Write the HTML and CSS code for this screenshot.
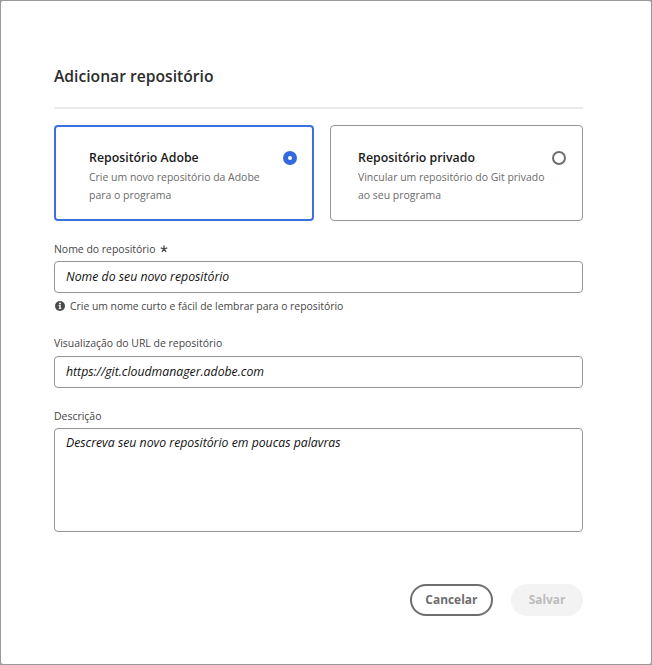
FILE: index.html
```html
<!DOCTYPE html>
<html lang="pt-BR">
<head>
<meta charset="utf-8">
<title>Adicionar repositório</title>
<link rel="stylesheet" href="styles.css">
</head>
<body>
<main class="dialog">
  <h1 class="title"><span class="narrow narrow-head">Adicionar repositório</span></h1>
  <hr class="rule">
  <div class="cards">
    <section class="card card-selected">
      <div class="card-text">
        <h2 class="card-title"><span class="narrow narrow-head">Repositório Adobe</span></h2>
        <p class="card-desc"><span class="narrow">Crie um novo repositório da Adobe<br>para o programa</span></p>
      </div>
      <span class="radio radio-on"></span>
    </section>
    <section class="card">
      <div class="card-text">
        <h2 class="card-title"><span class="narrow narrow-head">Repositório privado</span></h2>
        <p class="card-desc"><span class="narrow">Vincular um repositório do Git privado<br>ao seu programa</span></p>
      </div>
      <span class="radio"></span>
    </section>
  </div>
  <div class="field field-name">
    <div class="label"><span class="narrow">Nome do repositório</span>
      <svg class="star" viewBox="0 0 8 8"><path d="M4 4V.6M4 4l3.3-1.1M4 4l2.1 2.9M4 4L1.9 6.9M4 4L.7 2.9" fill="none" stroke="#4b4b4b" stroke-width="1.3"/></svg>
    </div>
    <div class="input"><span class="narrow narrow-input">Nome do seu novo repositório</span></div>
    <div class="help">
      <svg class="info" viewBox="0 0 10 10"><circle cx="5" cy="5" r="5" fill="#4b4b4b"/><circle cx="5" cy="2.5" r=".95" fill="#fff"/><path d="M3.7 4.1h2v3.1h.7v.9H3.7v-.9h.6V5h-.6z" fill="#fff"/></svg>
      <span class="narrow narrow-help">Crie um nome curto e fácil de lembrar para o repositório</span>
    </div>
  </div>
  <div class="field field-url">
    <div class="label"><span class="narrow">Visualização do URL de repositório</span></div>
    <div class="input"><span class="narrow narrow-input">https://git.cloudmanager.adobe.com</span></div>
  </div>
  <div class="field field-desc">
    <div class="label"><span class="narrow">Descrição</span></div>
    <div class="input textarea"><span class="narrow narrow-input">Descreva seu novo repositório em poucas palavras</span></div>
  </div>
  <div class="actions">
    <button class="btn btn-cancel"><span class="narrow narrow-btn">Cancelar</span></button>
    <button class="btn btn-save" disabled><span class="narrow narrow-btn">Salvar</span></button>
  </div>
</main>
</body>
</html>
```
FILE: styles.css
```css
* { box-sizing: border-box; }
body {
  margin: 0;
  background: #999;
  font-family: "Open Sans", "Noto Sans", sans-serif;
  font-size: 11.5px;
  line-height: 18px;
  color: #464646;
}
h1, h2, p { margin: 0; }

/* Slightly condensed text */
.narrow { display: inline-block; vertical-align: top; transform: scaleX(.909); transform-origin: 0 50%; white-space: nowrap; }
.narrow-head { transform: scaleX(.949); }
.narrow-input { transform: scaleX(.944); }
.narrow-help { transform: scaleX(.902); }
.narrow-btn { transform: scaleX(.917); transform-origin: 50% 50%; }

.dialog {
  height: 665px;
  padding: 63px 68px 0 53px;
  background: #fff;
  border: 1px solid #999;
  border-radius: 3px;
}
.title {
  font-size: 16.5px;
  font-weight: 600;
  line-height: 24px;
  color: #2c2c2c;
}
.rule {
  height: 2px;
  margin: 19px 0 16px;
  border: 0;
  background: #eaeaea;
}
.cards { display: grid; grid-template-columns: 260px 253px; gap: 16px; height: 96px; }
.card {
  display: flex;
  justify-content: space-between;
  padding: 22px 16px 0 27px;
  border: 1px solid #959595;
  border-radius: 4px;
}
.card-selected { padding: 21px 15px 0 33px; border: 2px solid #3b70e0; }
.card-text { width: 0; }
.card-title { margin-bottom: 2px; font-size: 13px; font-weight: 600; line-height: 18px; color: #1a1a1a; }
.card-desc { color: #6a6a6a; }
.radio {
  flex: none;
  width: 14px;
  height: 14px;
  margin-top: 3px;
  border: 2px solid #6e6e6e;
  border-radius: 50%;
}
.radio-on { border: 5px solid #3368df; }
.label { display: flex; align-items: center; height: 18px; }
.star { width: 8px; height: 8px; margin: -1px 0 0 -6px; }
.input {
  height: 32px;
  padding: 0 11px;
  border: 1px solid #959595;
  border-radius: 4px;
  font-size: 13px;
  font-style: italic;
  line-height: 29px;
  color: #111;
}
.field-name { margin-top: 19px; }
.field-name .input { margin-top: 3px; }
.help { display: flex; align-items: center; gap: 5px; height: 18px; margin-top: 4px; padding-left: 1px; }
.info { width: 10px; height: 10px; }
.field-url { margin-top: 19px; }
.field-url .input { margin-top: 4px; }
.field-desc { margin-top: 19px; }
.field-desc .input { margin-top: 3px; }
.textarea { height: 104px; line-height: 27px; }
.actions { display: flex; justify-content: flex-end; gap: 18px; margin-top: 52px; }
.btn {
  height: 32px;
  padding: 0 0 2px;
  border: 0;
  border-radius: 16px;
  font: 700 13px "Open Sans", "Noto Sans", sans-serif;
}
.btn-cancel { width: 83px; border: 2px solid #6e6e6e; background: #fff; color: #6e6e6e; }
.btn-save { width: 72px; background: #f3f3f3; color: #bcbcbc; }
```
